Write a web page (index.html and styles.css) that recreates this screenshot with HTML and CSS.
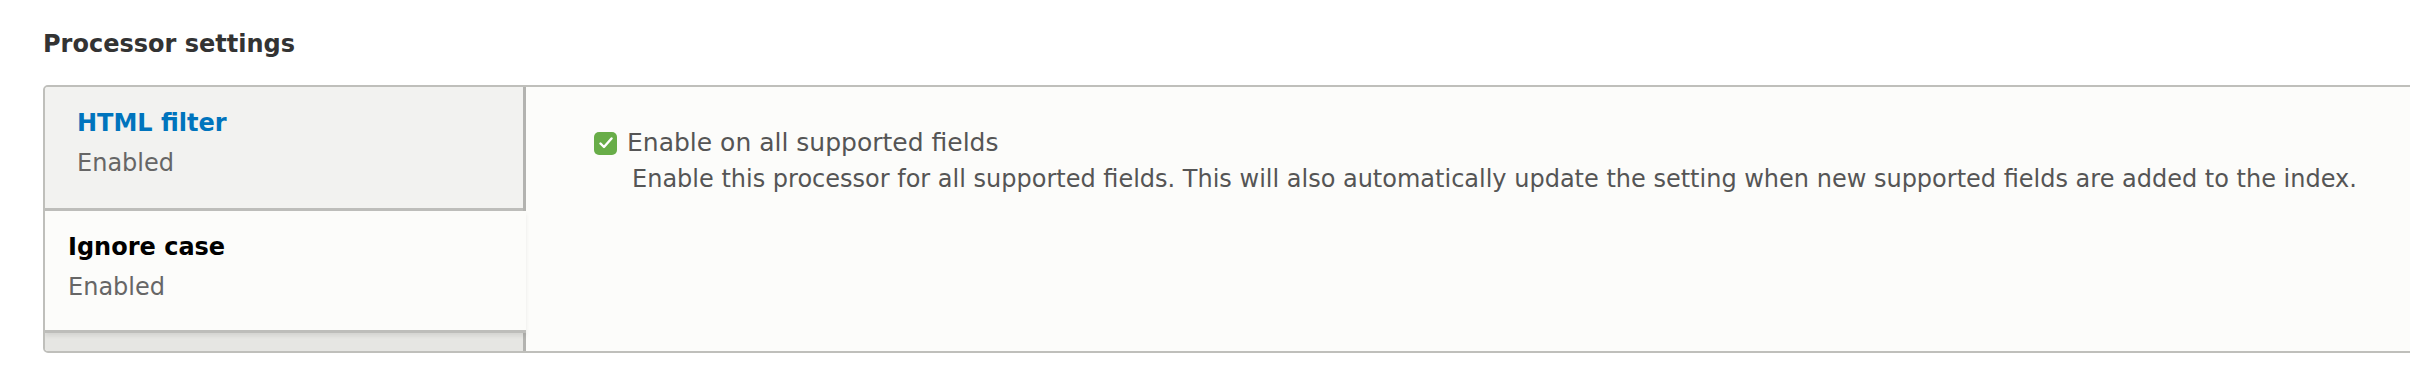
FILE: index.html
```html
<!DOCTYPE html>
<html lang="en">
<head>
  <meta charset="UTF-8" />
  <title>Processor settings</title>
  <link rel="stylesheet" href="styles.css">
</head>
<body>
  <div class="page">
    <h2 class="section-title">Processor settings</h2>

    <div class="vertical-tabs">
      <ul class="tab-list">
        <li class="tab">
          <a href="#html-filter">
            <strong class="tab-title">HTML filter</strong>
            <span class="tab-summary">Enabled</span>
          </a>
        </li>
        <li class="tab selected">
          <a href="#ignore-case">
            <strong class="tab-title">Ignore case</strong>
            <span class="tab-summary">Enabled</span>
          </a>
        </li>
      </ul>

      <div class="tab-pane">
        <div class="form-item">
          <label class="option">
            <span class="checkbox">
              <svg width="14" height="12" viewBox="0 0 14 12"><path d="M1.5 6.5 L5 10 L12.5 1.5" fill="none" stroke="#fff" stroke-width="2.4" stroke-linecap="round" stroke-linejoin="round"/></svg>
            </span>
            Enable on all supported fields
          </label>
          <div class="description">Enable this processor for all supported fields. This will also automatically update the setting when new supported fields are added to the index.</div>
        </div>
      </div>
    </div>
  </div>
</body>
</html>
```

FILE: styles.css
```css
* {
  box-sizing: border-box;
}

body {
  margin: 0;
  background: #fff;
  font-family: "DejaVu Sans", sans-serif;
  color: #333;
  overflow: hidden;
}

.page {
  padding: 28px 0 0 43px;
}

.section-title {
  margin: 0 0 25px;
  font-size: 24px;
  line-height: 32px;
  font-weight: bold;
  color: #333;
}

.vertical-tabs {
  display: flex;
  height: 268px;
  margin-right: -6px;
  background: #fcfcfa;
  border: 2px solid #bfbfbb;
  border-radius: 5px;
  overflow: hidden;
}

.tab-list {
  width: 481px;
  margin: 0;
  padding: 0;
  list-style: none;
  background: #e6e6e3;
  border-right: 3px solid #b3b3b0;
}

.tab {
  height: 124px;
  background: #f2f2f0;
  border-bottom: 3px solid #bdbdba;
}

.tab a {
  display: block;
  padding: 20px 20px 0 32px;
  text-decoration: none;
}

.tab-title {
  display: block;
  font-size: 24px;
  line-height: 32px;
  color: #0074bd;
}

.tab-summary {
  display: block;
  margin-top: 8px;
  font-size: 24px;
  line-height: 32px;
  color: #666;
}

.tab.selected {
  position: relative;
  height: 122px;
  margin-right: -3px;
  background: #fcfcfa;
  box-shadow: 0 3px 4px rgba(0, 0, 0, 0.08);
}

.tab.selected a {
  padding-left: 23px;
}

.tab.selected .tab-title {
  color: #000;
}

.tab-pane {
  flex: 1;
  padding: 40px 0 0 68px;
}

.option {
  display: flex;
  align-items: center;
  gap: 10px;
  font-size: 25px;
  line-height: 32px;
  color: #555;
}

.checkbox {
  display: flex;
  align-items: center;
  justify-content: center;
  width: 23px;
  height: 23px;
  background: #68ad48;
  border-radius: 5px;
}

.description {
  margin: 4px 0 0 38px;
  font-size: 24px;
  line-height: 32px;
  color: #555;
}
```
